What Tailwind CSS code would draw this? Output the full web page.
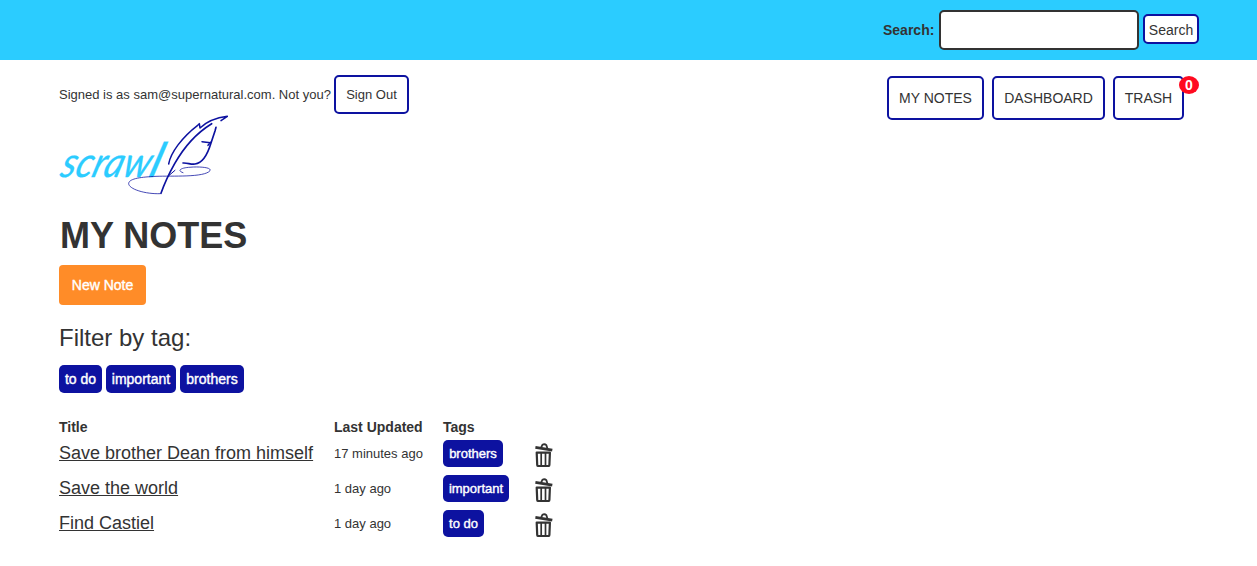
<!DOCTYPE html>
<html lang="en">
<head>
<meta charset="utf-8">
<title>Scrawl - My Notes</title>
<script src="https://cdn.jsdelivr.net/npm/@tailwindcss/browser@4"></script>
</head>
<body class="bg-white font-['Liberation_Sans',Arial,sans-serif] text-sm text-[#333]">
<svg class="hidden">
  <symbol id="trash" viewBox="0 0 18 24">
    <g fill="none" stroke="#333" stroke-linejoin="round">
      <path d="M.4 4.4 17.3 7.2" stroke-width="2.8"/>
      <path d="M6.2 4.4 7.4 1.8Q9.6.6 11.4 2.2L12.4 5.5" stroke-width="1.8"/>
      <path d="M1.7 9.6H14.9L14.4 21.8Q14.3 23 13 23H3.6Q2.3 23 2.2 21.8Z" stroke-width="2.2"/>
      <path d="M6.2 10V22M10.5 10V22" stroke-width="1.7"/>
    </g>
  </symbol>
</svg>
<header class="flex h-15 items-center justify-end bg-[#2bccff] pr-[58px]">
  <label for="q" class="mr-1 w-[52px] font-bold">Search:</label>
  <input id="q" class="h-10 w-50 rounded-[5px] border-2 border-[#333] bg-white">
  <button class="mb-0.5 ml-1 h-[30px] w-14 rounded-[5px] border-2 border-[#0d12a0] bg-white pt-0.5">Search</button>
</header>
<main class="ml-[59px] w-[1140px]">
  <div class="flex items-start justify-between">
    <div class="mt-[15px] flex items-center text-[13px]">
      <p class="w-[275px] pt-0.5 whitespace-nowrap">Signed is as sam@supernatural.com. Not you?</p>
      <button class="h-[39px] w-[75px] rounded-[5px] border-2 border-[#0d12a0] pt-0.5">Sign Out</button>
    </div>
    <nav class="mt-4 mr-[15px] flex gap-2">
      <a class="flex h-11 w-[97px] items-center justify-center rounded-[5px] border-2 border-[#0d12a0]">MY NOTES</a>
      <a class="flex h-11 w-[113px] items-center justify-center rounded-[5px] border-2 border-[#0d12a0]">DASHBOARD</a>
      <a class="relative flex h-11 w-[71px] items-center justify-center rounded-[5px] border-2 border-[#0d12a0]">TRASH
        <span class="absolute -top-0.5 -right-[17px] flex h-[18px] w-5 items-center justify-center rounded-[50%] bg-[#ff0a20] text-sm font-bold text-white">0</span>
      </a>
    </nav>
  </div>
  <svg class="-mt-[5px] h-20 w-[170px] overflow-visible" viewBox="27 14 510 240" fill="none">
    <text transform="translate(26 199) skewX(-17)" font-family="Lato" font-style="italic" fill="#2bccff" stroke="#2bccff" stroke-width="1"><tspan font-size="126" textLength="266" lengthAdjust="spacingAndGlyphs">scraw</tspan><tspan font-size="144">l</tspan></text>
    <g stroke="#0d12a0" stroke-linecap="round" stroke-linejoin="round">
      <path d="M356 161C362 127 396 81 443 45L448 40L450 53C468 36 500 22 532 18L513 31" stroke-width="4.5"/>
      <path d="M485 40C438 69 398 117 374 160C357 190 342 223 333 249" stroke-width="5"/>
      <path d="M498 51L495 62L483 98C474 128 461 158 435 161C422 163 413 157 399 158" stroke-width="5"/>
      <path d="M456 94 481 97M482 96 474 105" stroke-width="4.5"/>
      <path d="M331 250C286 252 235 236 236 219C238 204 276 200 318 198C365 196 464 202 480 181C486 171 447 168 416 171C392 173 380 181 399 187" stroke-width="2.3"/>
      <path d="M354 198 375 180" stroke-width="3"/>
    </g>
  </svg>
  <h1 class="mt-[21px] ml-px text-4xl leading-10 font-bold">MY NOTES</h1>
  <button class="mt-[9px] block h-10 w-[87px] rounded bg-[#ff8c28] text-white [-webkit-text-stroke:0.4px_white]">New Note</button>
  <h2 class="mt-[17px] text-2xl leading-8">Filter by tag:</h2>
  <div class="mt-[11px] flex gap-1 text-white [-webkit-text-stroke:0.4px_white]">
    <a class="flex h-7 w-[43px] items-center justify-center rounded-[5px] bg-[#0d12a0]">to do</a>
    <a class="flex h-7 w-[70px] items-center justify-center rounded-[5px] bg-[#0d12a0]">important</a>
    <a class="flex h-7 w-16 items-center justify-center rounded-[5px] bg-[#0d12a0]">brothers</a>
  </div>
  <section class="mt-6">
    <div class="grid h-[19px] grid-cols-[275px_109px_92px_18px] items-start font-bold">
      <span>Title</span><span>Last Updated</span><span>Tags</span>
    </div>
    <div class="grid h-[35px] grid-cols-[275px_109px_92px_18px] items-center text-[13px]">
      <a class="pb-0.5 text-lg leading-6 underline">Save brother Dean from himself</a>
      <span class="pt-0.5">17 minutes ago</span>
      <span class="flex h-[27px] w-[60px] items-center justify-center rounded-[5px] bg-[#0d12a0] pt-px text-white [-webkit-text-stroke:0.4px_white]">brothers</span>
      <svg class="mt-0.5 h-6 w-[18px]"><use href="#trash"/></svg>
    </div>
    <div class="grid h-[35px] grid-cols-[275px_109px_92px_18px] items-center text-[13px]">
      <a class="pb-0.5 text-lg leading-6 underline">Save the world</a>
      <span class="pt-0.5">1 day ago</span>
      <span class="flex h-[27px] w-[66px] items-center justify-center rounded-[5px] bg-[#0d12a0] pt-px text-white [-webkit-text-stroke:0.4px_white]">important</span>
      <svg class="mt-0.5 h-6 w-[18px]"><use href="#trash"/></svg>
    </div>
    <div class="grid h-[35px] grid-cols-[275px_109px_92px_18px] items-center text-[13px]">
      <a class="pb-0.5 text-lg leading-6 underline">Find Castiel</a>
      <span class="pt-0.5">1 day ago</span>
      <span class="flex h-[27px] w-[41px] items-center justify-center rounded-[5px] bg-[#0d12a0] pt-px text-white [-webkit-text-stroke:0.4px_white]">to do</span>
      <svg class="mt-0.5 h-6 w-[18px]"><use href="#trash"/></svg>
    </div>
  </section>
</main>
</body>
</html>
